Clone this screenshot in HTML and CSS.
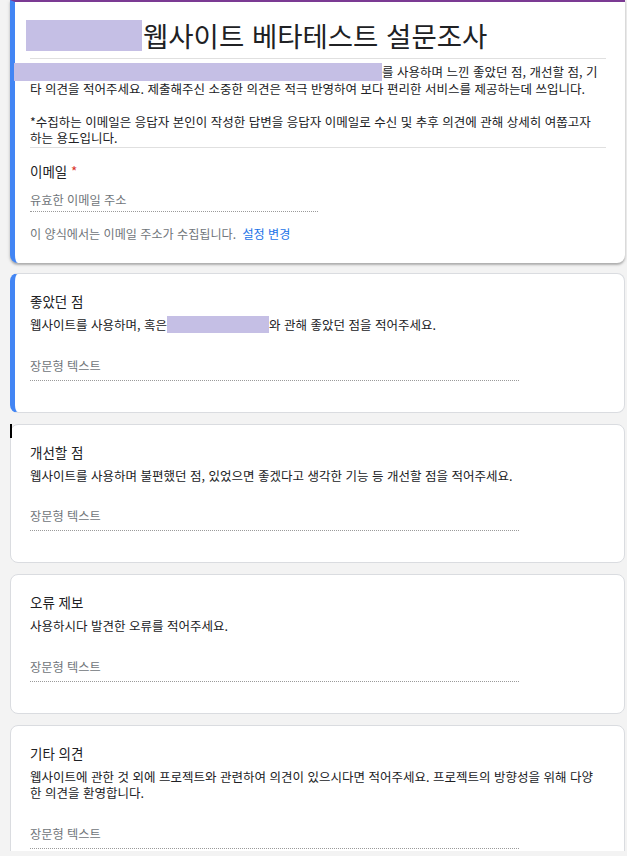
FILE: index.html
```html
<!DOCTYPE html>
<html lang="ko">
<head>
<meta charset="utf-8">
<title>웹사이트 베타테스트 설문조사</title>
<link rel="stylesheet" href="styles.css">
</head>
<body>
<div class="page">
  <section class="card header">
    <div class="title-row">
      <span class="redact redact-title"></span>
      <h1 class="form-title">웹사이트 베타테스트 설문조사</h1>
    </div>
    <p class="form-desc"><span class="redact redact-desc"></span>를 사용하며 느낀 좋았던 점, 개선할 점, 기<br>타 의견을 적어주세요. 제출해주신 소중한 의견은 적극 반영하여 보다 편리한 서비스를 제공하는데 쓰입니다.<br><br>*수집하는 이메일은 응답자 본인이 작성한 답변을 응답자 이메일로 수신 및 추후 의견에 관해 상세히 여쭙고자<br>하는 용도입니다.</p>
    <div class="email-label">이메일 <span class="req">*</span></div>
    <div class="input input-short">유효한 이메일 주소</div>
    <div class="email-note">이 양식에서는 이메일 주소가 수집됩니다. <a class="link">설정 변경</a></div>
  </section>

  <section class="card selected">
    <div class="q-title">좋았던 점</div>
    <p class="q-desc">웹사이트를 사용하며, 혹은<span class="redact redact-inline"></span>와 관해 좋았던 점을 적어주세요.</p>
    <div class="input input-long">장문형 텍스트</div>
  </section>

  <section class="card">
    <span class="caret"></span>
    <div class="q-title">개선할 점</div>
    <p class="q-desc">웹사이트를 사용하며 불편했던 점, 있었으면 좋겠다고 생각한 기능 등 개선할 점을 적어주세요.</p>
    <div class="input input-long">장문형 텍스트</div>
  </section>

  <section class="card">
    <div class="q-title">오류 제보</div>
    <p class="q-desc">사용하시다 발견한 오류를 적어주세요.</p>
    <div class="input input-long">장문형 텍스트</div>
  </section>

  <section class="card">
    <div class="q-title">기타 의견</div>
    <p class="q-desc">웹사이트에 관한 것 외에 프로젝트와 관련하여 의견이 있으시다면 적어주세요. 프로젝트의 방향성을 위해 다양<br>한 의견을 환영합니다.</p>
    <div class="input input-long">장문형 텍스트</div>
  </section>
</div>
</body>
</html>
```

FILE: styles.css
```css
* {
  box-sizing: border-box;
}

html, body {
  margin: 0;
  padding: 0;
}

body {
  background: #f3f3f3;
  color: #202124;
  font-family: "Noto Sans CJK KR", "Noto Sans", sans-serif;
}

.page {
  height: 851px;
  overflow: hidden;
  padding: 0 2px 0 10px;
}

.card {
  position: relative;
  background: #fff;
  border: 1px solid #dadce0;
  border-radius: 8px;
  margin-bottom: 11px;
  padding: 17px 18px 31px 19px;
}

.card.selected {
  border-left: 5px solid #4285f4;
  padding-left: 15px;
}

.card.header {
  border: none;
  border-top: 2px solid #7b3a93;
  border-left: 5px solid #4285f4;
  border-radius: 0 0 8px 8px;
  padding: 0 19px 21px 15px;
  margin-bottom: 10px;
  box-shadow: 0 2px 2px rgba(0, 0, 0, 0.22), 0 1px 4px rgba(0, 0, 0, 0.12);
}

.redact {
  display: inline-block;
  background: #c5bfe5;
}

.title-row {
  display: flex;
  align-items: center;
  padding: 18px 0 7px;
  border-bottom: 1px solid #e0e0e0;
}

.redact-title {
  flex: none;
  width: 116px;
  height: 31px;
  margin-left: -4px;
}

.form-title {
  margin: 0 0 0 1px;
  font-size: 27.5px;
  line-height: 31px;
  font-weight: 400;
  color: #202124;
}

.form-desc {
  margin: 0;
  padding-top: 5px;
  font-size: 12.5px;
  line-height: 16.6px;
  white-space: nowrap;
  border-bottom: 1px solid #e0e0e0;
}

.redact-desc {
  width: 368px;
  height: 18px;
  margin: -1px 0 -1px -16px;
  vertical-align: top;
}

.email-label {
  margin-top: 13px;
  font-size: 13.5px;
  line-height: 20px;
}

.req {
  color: #d93025;
}

.input {
  font-size: 12.2px;
  line-height: 16px;
  color: #70757a;
  border-bottom: 1px dotted #9a9a9a;
}

.input-short {
  width: 288px;
  margin-top: 11px;
  padding-bottom: 3px;
}

.input-long {
  width: 489px;
  margin-top: 24px;
  padding-bottom: 6px;
}

.email-note {
  margin-top: 14px;
  font-size: 12.1px;
  line-height: 16px;
  color: #70757a;
}

.link {
  margin-left: 3px;
  color: #1a73e8;
}

.q-title {
  font-size: 13.5px;
  line-height: 20px;
}

.q-desc {
  margin: 6px 0 0;
  font-size: 12.5px;
  line-height: 16.6px;
  white-space: nowrap;
}

.redact-inline {
  width: 102px;
  height: 17px;
  vertical-align: top;
  margin: -1px 0 -1px 0;
}

.caret {
  position: absolute;
  left: -1px;
  top: -1px;
  width: 2px;
  height: 14px;
  background: #000;
}
```
